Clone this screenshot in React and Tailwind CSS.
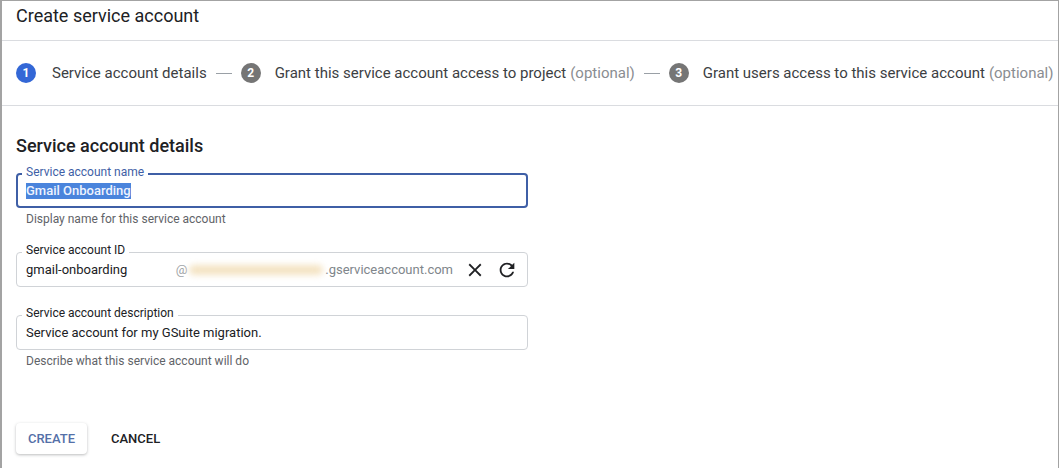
import React from 'react';

const Step = ({ n, active, label, optional }) => (
  <div className="flex items-center">
    <span
      className={`flex h-5 w-5 items-center justify-center rounded-full text-[12px] font-bold text-white ${
        active ? 'bg-[#3367d6]' : 'bg-[#757575]'
      }`}
    >
      {n}
    </span>
    <span className={`${active ? 'ml-4' : 'ml-[14px]'} text-[15px] text-[#3c4043]`}>
      {label}
      {optional && <span className="ml-1 text-[#8a8d91]">(optional)</span>}
    </span>
  </div>
);

const Dash = () => <span className="mx-[9px] h-px w-[16px] bg-[#9aa0a6]" />;

const Field = ({ label, focused, children, className = '' }) => (
  <div
    className={`relative flex h-[35px] w-[512px] items-center rounded-[4px] ${
      focused ? 'border-2 border-[#3f5fa6] px-[8px]' : 'border border-[#d0d3d7] px-[9px]'
    } ${className}`}
  >
    <span
      className={`absolute top-[-10px] bg-white px-[4px] text-[12px] leading-[14px] ${
        focused ? 'left-[4px] text-[#3f5fa6]' : 'left-[5px] text-[#202124]'
      }`}
    >
      {label}
    </span>
    {children}
  </div>
);

const CloseIcon = () => (
  <svg viewBox="0 0 24 24" className="h-[22px] w-[22px]" fill="#202124">
    <path d="M19 6.41L17.59 5 12 10.59 6.41 5 5 6.41 10.59 12 5 17.59 6.41 19 12 13.41 17.59 19 19 17.59 13.41 12z" />
  </svg>
);

const RefreshIcon = () => (
  <svg viewBox="0 0 24 24" className="h-[22px] w-[22px]" fill="#202124">
    <path d="M17.65 6.35C16.2 4.9 14.21 4 12 4c-4.42 0-7.99 3.58-7.99 8s3.57 8 7.99 8c3.73 0 6.84-2.55 7.73-6h-2.08c-.82 2.33-3.04 4-5.65 4-3.31 0-6-2.69-6-6s2.69-6 6-6c1.66 0 3.14.69 4.22 1.78L13 11h7V4l-2.35 2.35z" />
  </svg>
);

export default function App() {
  return (
    <div
      className="h-[468px] w-[1059px] overflow-hidden border-l-2 border-r border-t border-[#a3a3a3] bg-white text-[#202124]"
      style={{ fontFamily: 'Roboto, "Liberation Sans", sans-serif' }}
    >
      <div className="h-[40px] border-b border-[#dadce0] px-[14px] pt-[3px]">
        <h1 className="text-[18px] leading-6 text-[#202124]">Create service account</h1>
      </div>

      <div className="flex h-[65px] items-center border-b border-[#dadce0] pl-[14px]">
        <Step n="1" active label="Service account details" />
        <Dash />
        <Step n="2" label="Grant this service account access to project" optional />
        <Dash />
        <Step n="3" label="Grant users access to this service account" optional />
      </div>

      <div className="px-[14px]">
        <h2 className="mt-[28px] text-[18px] font-medium leading-6 text-[#202124]">
          Service account details
        </h2>

        <Field label="Service account name" focused className="mt-[15px]">
          <span className="bg-[#4a84dc] text-[13px] font-medium leading-[16px] text-[#eef3ff]">
            Gmail Onboarding
          </span>
        </Field>
        <p className="mt-[3px] pl-[10px] text-[12px] leading-4 text-[#5f6368]">
          Display name for this service account
        </p>

        <Field label="Service account ID" className="mt-[25px]">
          <span className="w-[152px] text-[13px] text-[#202124]">gmail-onboarding</span>
          <span className="text-[13px] text-[#a0a4a8]">@</span>
          <span className="mx-[2px] h-[10px] w-[136px] rounded-full bg-[#f4e3c2] blur-[3px]" />
          <span className="text-[13px] text-[#80868b]">.gserviceaccount.com</span>
          <span className="ml-[11px] flex items-center">
            <CloseIcon />
          </span>
          <span className="ml-[10px] flex items-center">
            <RefreshIcon />
          </span>
        </Field>

        <Field label="Service account description" className="mt-[28px]">
          <span className="text-[13px] text-[#202124]">Service account for my GSuite migration.</span>
        </Field>
        <p className="mt-[3px] pl-[10px] text-[12px] leading-4 text-[#5f6368]">
          Describe what this service account will do
        </p>

        <div className="mt-[54px] flex items-center">
          <button className="h-[31px] w-[71px] rounded-[4px] bg-white text-[13px] font-medium text-[#5470a8] shadow-[0_1px_3px_rgba(60,64,67,0.35)]">
            CREATE
          </button>
          <button className="ml-[16px] px-[8px] text-[13px] font-medium text-[#202124]">
            CANCEL
          </button>
        </div>
      </div>
    </div>
  );
}
